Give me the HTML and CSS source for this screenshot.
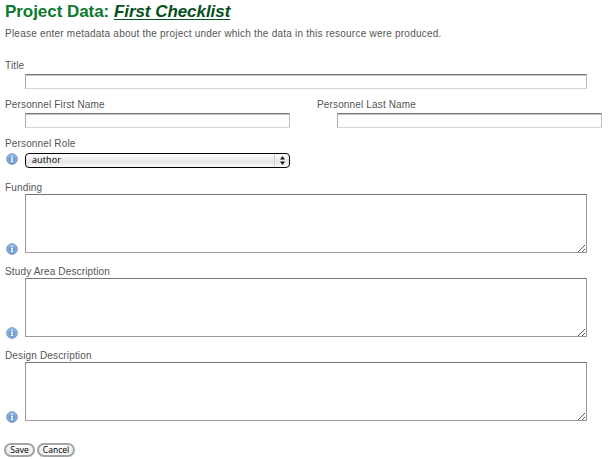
FILE: index.html
```html
<!DOCTYPE html>
<html lang="en">
<head>
<meta charset="utf-8">
<title>Project Data</title>
<link rel="stylesheet" href="styles.css">
</head>
<body>
<svg class="defs" aria-hidden="true">
  <defs>
    <linearGradient id="ball" x1="0" y1="0" x2="0" y2="1"><stop offset="0" stop-color="#86b0e0"/><stop offset="1" stop-color="#5688c6"/></linearGradient>
    <symbol id="info" viewBox="0 0 12 12">
      <circle cx="6" cy="6" r="5.4" fill="url(#ball)" stroke="#7394ba" stroke-width=".8"/>
      <circle cx="6" cy="6" r="4.2" fill="none" stroke="#a9c9ec" stroke-width=".7"/>
      <path d="M5.2 2.7h1.5v1.3H5.2zM4.8 4.8h1.9v3.3h.6v.9H4.7v-.9h.6V5.7h-.5z" fill="#fff"/>
    </symbol>
    <symbol id="grip" viewBox="0 0 8 8">
      <path d="M0 7h1v1H0zM1 6h1v1H1zM2 5h1v1H2zM3 4h1v1H3zM4 3h1v1H4zM5 2h1v1H5zM6 1h1v1H6zM4 7h1v1H4zM5 6h1v1H5zM6 5h1v1H6z" fill="#555"/>
    </symbol>
  </defs>
</svg>
<form class="page">
  <h1 class="heading">Project Data: <a class="resource">First Checklist</a></h1>
  <p class="intro">Please enter metadata about the project under which the data in this resource were produced.</p>
  <div class="field title-field">
    <label class="label" for="title">Title</label>
    <input class="text wide" id="title">
  </div>
  <div class="names">
    <div class="field">
      <label class="label" for="first">Personnel First Name</label>
      <input class="text" id="first">
    </div>
    <div class="field">
      <label class="label" for="last">Personnel Last Name</label>
      <input class="text" id="last">
    </div>
  </div>
  <div class="field role">
    <span class="label">Personnel Role</span>
    <div class="row">
      <svg class="info"><use href="#info"/></svg>
      <div class="select"><span>author</span><span class="arrows"><svg width="5" height="9" viewBox="0 0 5 9"><path d="M2.5 0 5 3.5H0zM2.5 9 5 5.5H0z" fill="#111"/></svg></span></div>
    </div>
  </div>
  <div class="field area">
    <label class="label" for="funding">Funding</label>
    <div class="row"><svg class="info"><use href="#info"/></svg><div class="box"><textarea id="funding"></textarea><svg class="grip"><use href="#grip"/></svg></div></div>
  </div>
  <div class="field area">
    <label class="label" for="study">Study Area Description</label>
    <div class="row"><svg class="info"><use href="#info"/></svg><div class="box"><textarea id="study"></textarea><svg class="grip"><use href="#grip"/></svg></div></div>
  </div>
  <div class="field area">
    <label class="label" for="design">Design Description</label>
    <div class="row"><svg class="info"><use href="#info"/></svg><div class="box"><textarea id="design"></textarea><svg class="grip"><use href="#grip"/></svg></div></div>
  </div>
  <div class="actions">
    <button class="btn save" type="button">Save</button>
    <button class="btn cancel" type="button">Cancel</button>
  </div>
</form>
</body>
</html>
```
FILE: styles.css
```css
* { box-sizing: border-box; }
body {
  margin: 0;
  background: #fff;
  color: #555;
  font: 10px/12px "Liberation Sans", Arial, sans-serif;
  letter-spacing: .225px;
  overflow: hidden;
}
.defs { position: absolute; width: 0; height: 0; }
.page { display: flex; flex-direction: column; padding-left: 5px; }
.heading {
  margin: 2px 0 0;
  height: 20px;
  font-size: 17px;
  line-height: 20px;
  letter-spacing: -.05px;
  color: #0b7a2e;
  white-space: nowrap;
}
.resource {
  color: #06501c;
  font-style: italic;
  text-decoration: underline;
  text-decoration-thickness: 1px;
  text-underline-offset: 2px;
}
.intro { margin: 6px 0 0; white-space: nowrap; }
.field { display: flex; flex-direction: column; }
.label {
  height: 12px;
  align-self: flex-start;
  white-space: nowrap;
  letter-spacing: .15px;
}
.title-field { margin-top: 20px; }
.text {
  width: 265px;
  height: 15px;
  margin: 2px 0 0 20px;
  padding: 0 3px;
  border: 1px solid #d4d4d4;
  border-top-color: #777;
  border-left-color: #aaa;
  border-right-color: #bbb;
  box-shadow: inset 0 1px #c4c4c4;
  background: #fff;
  outline: 0;
}
.wide { width: 562px; }
.names { display: flex; gap: 27px; margin-top: 10px; }
.role { margin-top: 10px; }
.role .row { margin-top: 3px; align-items: center; }
.role .info { margin-top: -4px; }
.row { display: flex; }
.info { width: 12px; height: 12px; margin: 0 7px 0 1px; flex: none; }
.select {
  display: flex;
  justify-content: space-between;
  width: 265px;
  height: 15px;
  padding-left: 6px;
  border: 1px solid #000;
  border-radius: 4px;
  background: linear-gradient(#fff, #eee 40%, #e6e6e6 60%, #fafafa);
  color: #000;
  font: 9px/12px "Open Sans", sans-serif;
  letter-spacing: .1px;
}
.arrows {
  display: flex;
  align-items: center;
  justify-content: center;
  width: 15px;
  border-left: 1px solid #ccc;
}
.area { margin-top: 13px; }
.role + .area { margin-top: 14px; }
.area .row { align-items: flex-end; }
.area .info { margin-bottom: -2px; }
.box { position: relative; width: 562px; height: 59px; }
textarea {
  display: block;
  width: 100%;
  height: 100%;
  border: 1px solid #999;
  border-top-color: #777;
  resize: none;
  outline: 0;
}
.grip { position: absolute; right: 1px; bottom: 1px; width: 8px; height: 8px; }
.actions { display: flex; gap: 2px; margin: 22px 0 0 -1px; }
.btn {
  height: 14px;
  padding: 0;
  border: 2px solid #a4a4a4;
  border-radius: 7px;
  background: linear-gradient(#fff, #eee 55%, #fafafa);
  color: #000;
  font: 8.5px/10px "Open Sans", sans-serif;
  letter-spacing: 0;
}
.save { width: 31px; }
.cancel { width: 38px; }
```
